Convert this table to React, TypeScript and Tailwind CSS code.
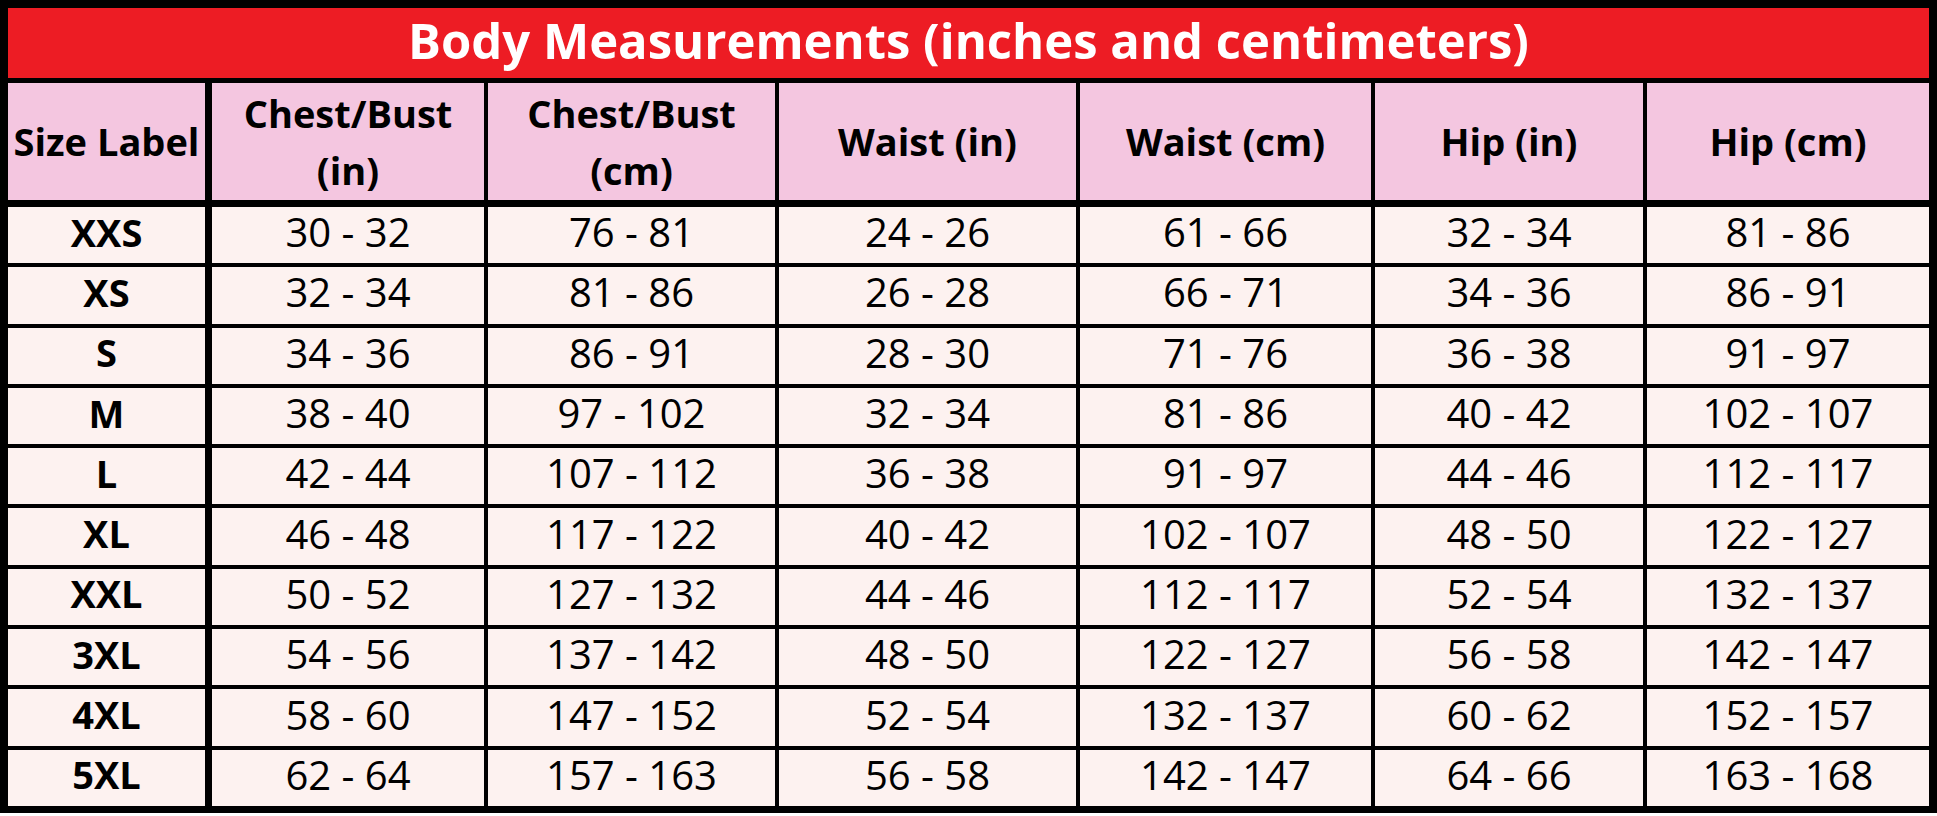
const headers = [
  "Size Label",
  "Chest/Bust (in)",
  "Chest/Bust (cm)",
  "Waist (in)",
  "Waist (cm)",
  "Hip (in)",
  "Hip (cm)",
];

const rows = [
  ["XXS", "30 - 32", "76 - 81", "24 - 26", "61 - 66", "32 - 34", "81 - 86"],
  ["XS", "32 - 34", "81 - 86", "26 - 28", "66 - 71", "34 - 36", "86 - 91"],
  ["S", "34 - 36", "86 - 91", "28 - 30", "71 - 76", "36 - 38", "91 - 97"],
  ["M", "38 - 40", "97 - 102", "32 - 34", "81 - 86", "40 - 42", "102 - 107"],
  ["L", "42 - 44", "107 - 112", "36 - 38", "91 - 97", "44 - 46", "112 - 117"],
  ["XL", "46 - 48", "117 - 122", "40 - 42", "102 - 107", "48 - 50", "122 - 127"],
  ["XXL", "50 - 52", "127 - 132", "44 - 46", "112 - 117", "52 - 54", "132 - 137"],
  ["3XL", "54 - 56", "137 - 142", "48 - 50", "122 - 127", "56 - 58", "142 - 147"],
  ["4XL", "58 - 60", "147 - 152", "52 - 54", "132 - 137", "60 - 62", "152 - 157"],
  ["5XL", "62 - 64", "157 - 163", "56 - 58", "142 - 147", "64 - 66", "163 - 168"],
];

const cols = "grid grid-cols-[200px_272px_287px_297px_291px_268px_282px] gap-x-[4px]";

const App = () => {
  return (
    <div className="w-[1937px] bg-black px-[8px] pt-[8px] pb-[7px] font-['Open_Sans',sans-serif] text-black">
      {/* title */}
      <div className="flex h-[70px] items-center justify-center bg-[#ed1c24] pb-[4px] text-[49px] font-bold text-white">
        Body Measurements (inches and centimeters)
      </div>

      {/* header row */}
      <div className={`${cols} mt-[5px] h-[117px]`}>
        {headers.map((h, i) => (
          <div
            key={h}
            className={`flex items-center justify-center bg-[#f4c6e0] text-center text-[38px] leading-[57px] font-bold ${i === 0 ? "mr-[3px]" : ""}`}
          >
            {h.includes("/") ? (
              <span>
                {h.split(" ")[0]}
                <br />
                {h.split(" ")[1]}
              </span>
            ) : (
              <span>{h}</span>
            )}
          </div>
        ))}
      </div>

      {/* data rows */}
      <div className={`${cols} mt-[7px] h-[599px] grid-rows-[repeat(10,minmax(0,1fr))] gap-y-[4px]`}>
        {rows.map((r) =>
          r.map((v, i) => (
            <div
              key={r[0] + i}
              className={`flex items-center justify-center bg-[#fdf2f0] pb-[6px] ${i === 0 ? "mr-[3px] text-[38px] font-bold" : "text-[40px]"}`}
            >
              {v}
            </div>
          )),
        )}
      </div>
    </div>
  );
};

export default App;
